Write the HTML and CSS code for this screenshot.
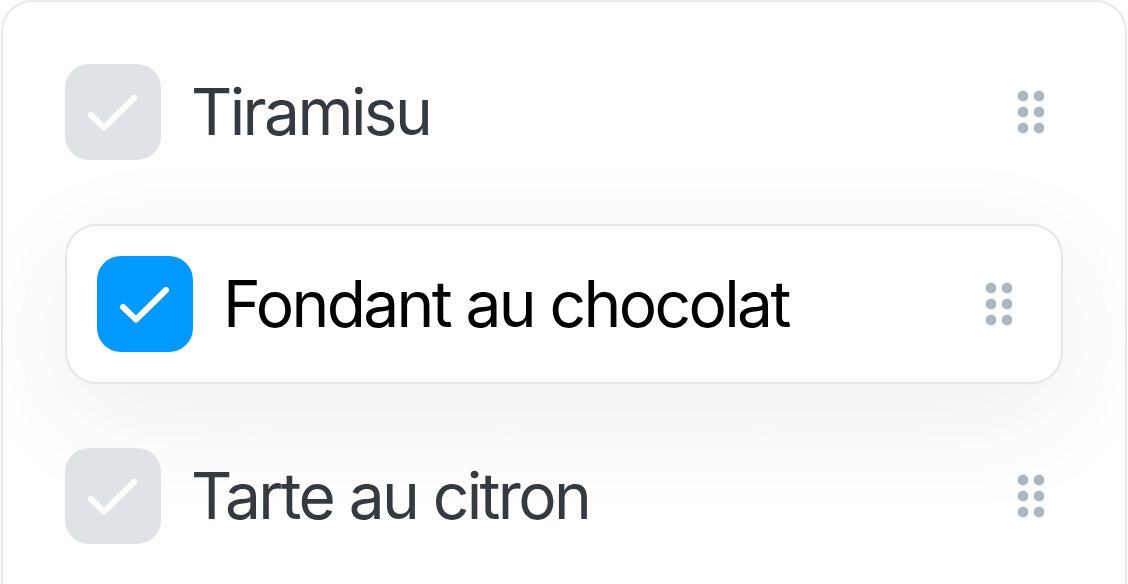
FILE: index.html
```html
<!DOCTYPE html>
<html lang="fr">
<head>
<meta charset="utf-8">
<link rel="stylesheet" href="styles.css">
</head>
<body>
<div class="panel">
  <ul class="list">
    <li class="item">
      <span class="check">
        <svg viewBox="0 0 24 24" width="96" height="96"><path d="M6.5 12.75 L9.75 15.9 L17.25 8.5" fill="none" stroke="#fff" stroke-width="1.5" stroke-linecap="round" stroke-linejoin="round"/></svg>
      </span>
      <span class="label">Tiramisu</span>
      <span class="grip">
        <svg viewBox="0 0 16 24" width="64" height="96"><g fill="#adb5bd"><circle cx="6" cy="8" r="1.35"/><circle cx="10" cy="8" r="1.35"/><circle cx="6" cy="12" r="1.35"/><circle cx="10" cy="12" r="1.35"/><circle cx="6" cy="16" r="1.35"/><circle cx="10" cy="16" r="1.35"/></g></svg>
      </span>
    </li>
    <li class="item item--active">
      <span class="check check--on">
        <svg viewBox="0 0 24 24" width="96" height="96"><path d="M6.5 12.75 L9.75 15.9 L17.25 8.5" fill="none" stroke="#fff" stroke-width="1.5" stroke-linecap="round" stroke-linejoin="round"/></svg>
      </span>
      <span class="label label--active">Fondant au chocolat</span>
      <span class="grip">
        <svg viewBox="0 0 16 24" width="64" height="96"><g fill="#adb5bd"><circle cx="6" cy="8" r="1.35"/><circle cx="10" cy="8" r="1.35"/><circle cx="6" cy="12" r="1.35"/><circle cx="10" cy="12" r="1.35"/><circle cx="6" cy="16" r="1.35"/><circle cx="10" cy="16" r="1.35"/></g></svg>
      </span>
    </li>
    <li class="item">
      <span class="check">
        <svg viewBox="0 0 24 24" width="96" height="96"><path d="M6.5 12.75 L9.75 15.9 L17.25 8.5" fill="none" stroke="#fff" stroke-width="1.5" stroke-linecap="round" stroke-linejoin="round"/></svg>
      </span>
      <span class="label">Tarte au citron</span>
      <span class="grip">
        <svg viewBox="0 0 16 24" width="64" height="96"><g fill="#adb5bd"><circle cx="6" cy="8" r="1.35"/><circle cx="10" cy="8" r="1.35"/><circle cx="6" cy="12" r="1.35"/><circle cx="10" cy="12" r="1.35"/><circle cx="6" cy="16" r="1.35"/><circle cx="10" cy="16" r="1.35"/></g></svg>
      </span>
    </li>
  </ul>
</div>
</body>
</html>
```
FILE: styles.css
```css
html, body {
  margin: 0;
  padding: 0;
  background: #ffffff;
  overflow: hidden;
}
body {
  font-family: Inter, "Noto Sans", sans-serif;
  padding-left: 1px;
}
.panel {
  width: 1126px;
  box-sizing: border-box;
  border: 2px solid #e7e9ec;
  border-radius: 32px;
  padding: 30px;
  background: #ffffff;
  height: 640px;
}
.list {
  list-style: none;
  margin: 0;
  padding: 0;
  display: flex;
  flex-direction: column;
  gap: 32px;
}
.item {
  display: flex;
  align-items: center;
  gap: 30px;
  padding: 30px;
  border: 2px solid transparent;
  border-radius: 32px;
}
.item--active {
  margin: 0 32px;
  background: #ffffff;
  border-color: #e5e7eb;
  box-shadow: 0 32px 120px rgba(0, 0, 0, 0.065);
}
.check {
  flex: none;
  width: 96px;
  height: 96px;
  border-radius: 24px;
  background: #dfe2e6;
  display: flex;
}
.check--on {
  background: #0099ff;
}
.label {
  flex: 1;
  font-size: 64px;
  line-height: 96px;
  color: #343a40;
  letter-spacing: -2.6px;
}
.label--active {
  color: #000000;
}
.grip {
  flex: none;
  display: flex;
  width: 64px;
  height: 96px;
  margin-left: 2px;
}
```
